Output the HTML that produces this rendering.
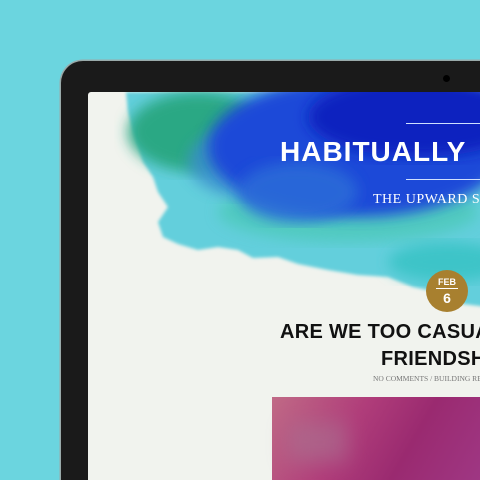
<!DOCTYPE html>
<html><head><style>
html,body{margin:0;width:480px;height:480px;overflow:hidden}
body{background:#6bd5df;position:relative;font-family:"Liberation Sans",sans-serif}
.bez{position:absolute;left:61px;top:61px;width:419px;height:419px;background:#1a1a1a;border-radius:22px 0 0 0;box-shadow:0 0 0 1.5px #9aa}
.cam{position:absolute;left:443px;top:75px;width:7px;height:7px;border-radius:50%;background:#000}
.scr{position:absolute;left:88px;top:92px;width:392px;height:388px;background:#f1f3ee;border-radius:3px 0 0 0;overflow:hidden}
.t{position:absolute;color:#fff;white-space:nowrap}
</style></head><body>
<div class="bez"></div><div class="cam"></div>
<div class="scr">
<svg width="400" height="400" style="position:absolute;left:0;top:0">
<defs><filter id="b"><feGaussianBlur stdDeviation="7"/></filter><filter id="b2"><feGaussianBlur stdDeviation="1.5"/></filter></defs>
<path d="M38 0 L400 0 L400 215 L375 212 L350 200 L325 195 L300 185 L270 183 L240 178 L210 172 L190 165 L165 166 L150 158 L130 155 L110 158 L90 152 L75 145 L70 130 L80 115 L70 100 L65 85 L55 70 L50 55 L45 40 L40 20 Z" fill="#63cfdc" filter="url(#b2)"/>
<ellipse cx="260" cy="120" rx="130" ry="30" fill="#4ac8b4" opacity=".7" filter="url(#b)"/>
<ellipse cx="110" cy="40" rx="70" ry="40" fill="#2ba884" filter="url(#b)"/>
<ellipse cx="160" cy="70" rx="60" ry="35" fill="#3a8fcc" opacity=".8" filter="url(#b)"/>
<ellipse cx="270" cy="55" rx="150" ry="70" fill="#1a48d8" filter="url(#b)"/>
<ellipse cx="210" cy="100" rx="60" ry="30" fill="#2c6ad8" opacity=".9" filter="url(#b)"/>
<ellipse cx="330" cy="25" rx="110" ry="40" fill="#0a22bf" filter="url(#b)"/>
<ellipse cx="360" cy="170" rx="60" ry="20" fill="#3cc4c8" filter="url(#b)"/>
</svg>
<div style="position:absolute;left:318px;top:31px;width:90px;height:1px;background:#cfe0ff"></div>
<div style="position:absolute;left:318px;top:87px;width:90px;height:1px;background:#cfe0ff"></div>
<div class="t" style="left:192px;top:44px;font-size:28px;font-weight:bold;letter-spacing:1px">HABITUALLY</div>
<div class="t" style="left:285px;top:100px;font-family:'Liberation Serif',serif;font-size:14px;letter-spacing:.5px">THE UPWARD SPIRAL</div>
<div style="position:absolute;left:338px;top:178px;width:42px;height:42px;border-radius:50%;background:#a8802f;color:#fff;text-align:center;font-weight:bold">
<div style="font-size:9px;margin-top:7px">FEB</div>
<div style="width:22px;height:1px;background:#fff;margin:1px auto"></div>
<div style="font-size:14px">6</div></div>
<div style="position:absolute;left:192px;top:229px;font-size:20px;font-weight:bold;color:#111;white-space:nowrap;letter-spacing:.3px">ARE WE TOO CASUAL</div>
<div style="position:absolute;left:293px;top:256px;font-size:20px;font-weight:bold;color:#111;white-space:nowrap;letter-spacing:.3px">FRIENDSHIP</div>
<div style="position:absolute;left:285px;top:282px;font-family:'Liberation Serif',serif;font-size:7.5px;color:#777;white-space:nowrap">NO COMMENTS / BUILDING RELATIONSHIPS</div>
<div style="position:absolute;left:184px;top:305px;width:220px;height:100px;background:linear-gradient(120deg,#c06a86,#b03d7a 35%,#9a2a70 60%,#a03a88);"></div>
<div style="position:absolute;left:200px;top:330px;width:60px;height:40px;background:#a97090;filter:blur(10px);opacity:.6"></div>
</div>
</body></html>
